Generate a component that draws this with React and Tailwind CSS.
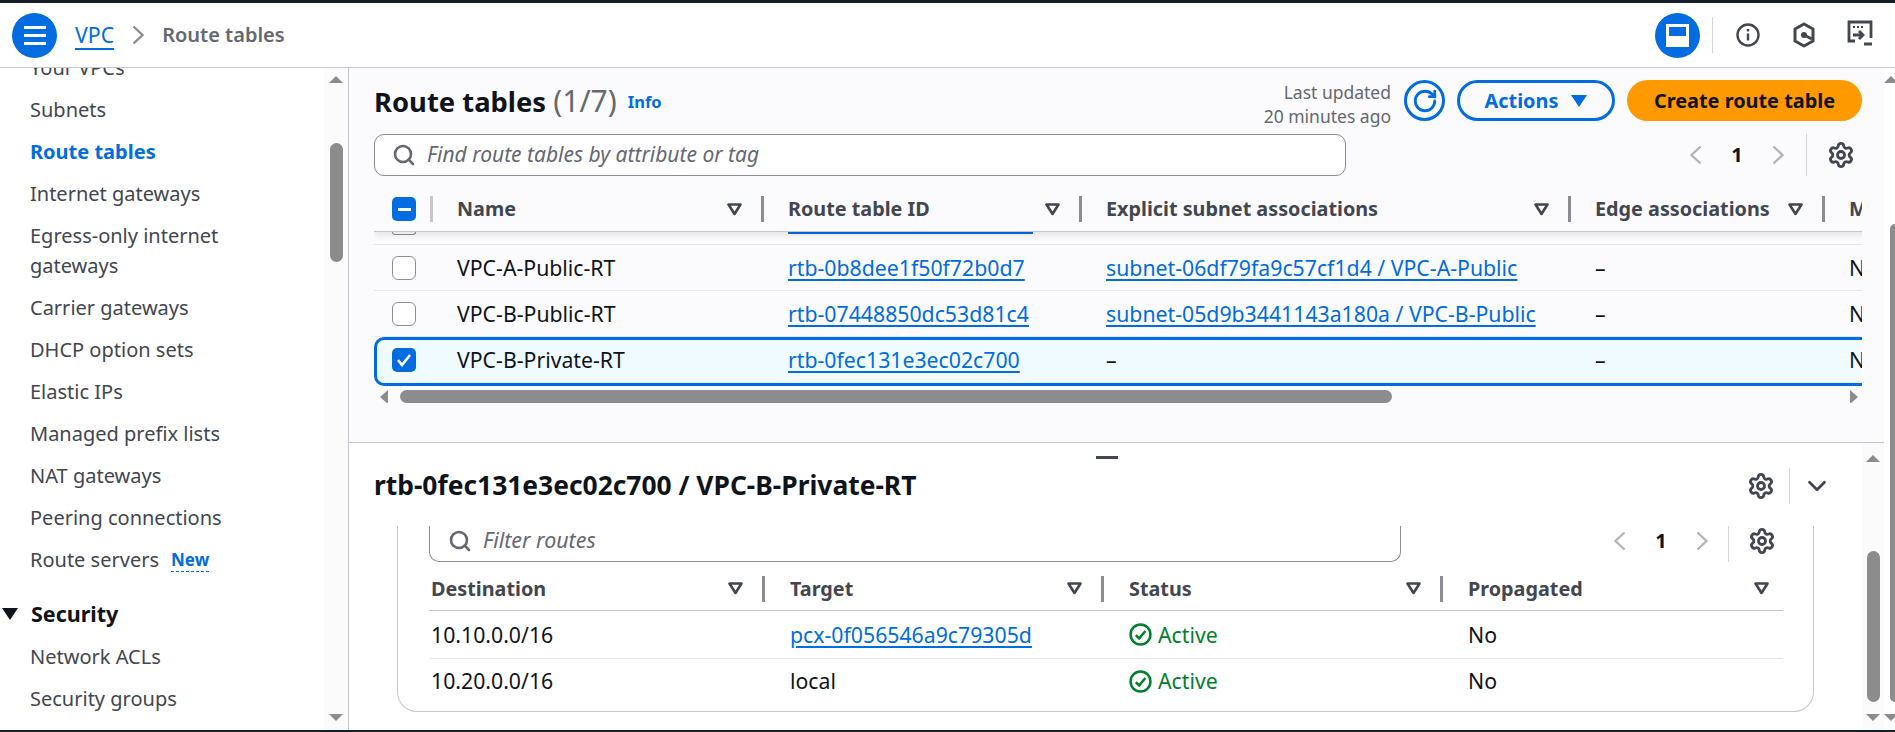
import { Search, Settings, ChevronDown, RotateCw } from 'lucide-react';

const navItems = [
    { label: 'Subnets' },
    { label: 'Route tables', active: true },
    { label: 'Internet gateways' },
    { label: 'Egress-only internet gateways' },
    { label: 'Carrier gateways' },
    { label: 'DHCP option sets' },
    { label: 'Elastic IPs' },
    { label: 'Managed prefix lists' },
    { label: 'NAT gateways' },
    { label: 'Peering connections' },
];

const routeColumns = [
    { label: 'Name', width: 'w-[331px]' },
    { label: 'Route table ID', width: 'w-[318px]' },
    { label: 'Explicit subnet associations', width: 'w-[489px]' },
    { label: 'Edge associations', width: 'w-[254px]' },
];

const rows = [
    { name: 'VPC-A-Public-RT', id: 'rtb-0b8dee1f50f72b0d7', subnet: 'subnet-06df79fa9c57cf1d4 / VPC-A-Public' },
    { name: 'VPC-B-Public-RT', id: 'rtb-07448850dc53d81c4', subnet: 'subnet-05d9b3441143a180a / VPC-B-Public' },
];

const Caret = () => (
    <svg width="15" height="13" viewBox="0 0 15 13" className="shrink-0">
        <path d="M1.5 1.5h12L7.5 11z" fill="none" stroke="#424650" strokeWidth="2.6" strokeLinejoin="round" />
    </svg>
);

const HeaderSep = () => <div className="w-[3px] h-[26px] bg-[#8c8c94] shrink-0" />;

const PageLeft = ({ className }) => (
    <svg width="13" height="20" viewBox="0 0 13 20" fill="none" stroke="currentColor" strokeWidth="2.4" className={className}>
        <path d="M11.5 1.5L2.5 10l9 8.5" />
    </svg>
);

const PageRight = ({ className }) => (
    <svg width="13" height="20" viewBox="0 0 13 20" fill="none" stroke="currentColor" strokeWidth="2.4" className={className}>
        <path d="M1.5 1.5l9 8.5-9 8.5" />
    </svg>
);

const Link = ({ children }) => (
    <span className="text-[#006ce0] underline underline-offset-[3px] decoration-[1.5px] whitespace-nowrap">{children}</span>
);

const Scrollbar = ({ arrowTop = 8, thumbTop, thumbHeight, className }) => (
    <div className={`flex flex-col items-center bg-[#fbfbfb] shrink-0 ${className}`}>
        <div className="w-0 h-0 border-x-[7px] border-x-transparent border-b-[7px] border-b-[#8c8c8c]" style={{ marginTop: arrowTop }} />
        <div className="w-[13px] rounded-full bg-[#8c8c8c]" style={{ marginTop: thumbTop, height: thumbHeight }} />
        <div className="flex-1" />
        <div className="w-0 h-0 border-x-[7px] border-x-transparent border-t-[7px] border-t-[#8c8c8c] mb-[9px]" />
    </div>
);

const Pager = () => (
    <div className="flex items-center text-[#b4b4bb]">
        <PageLeft />
        <span className="w-[70px] text-center text-[#0f141a] font-bold text-[20px]">1</span>
        <PageRight />
    </div>
);

const Sidebar = () => (
    <aside className="w-[349px] shrink-0 flex border-r border-[#c6c6cd] overflow-hidden">
        <div className="flex-1 min-w-0 text-[20px] text-[#424650] overflow-hidden">
            <div className="pl-[30px] h-[30px] -mt-[15px] leading-[30px]">Your VPCs</div>
            <ul className="pl-[30px] mt-[12px] flex flex-col gap-[12px] pr-[60px]">
                {navItems.map((item) => (
                    <li key={item.label} className={`leading-[30px] ${item.active ? 'text-[#006ce0] font-bold' : ''}`}>
                        {item.label}
                    </li>
                ))}
                <li className="leading-[30px] flex items-center gap-[12px] whitespace-nowrap">
                    Route servers
                    <span className="text-[#006ce0] font-bold text-[17px] border-b border-dashed border-[#006ce0] leading-[23px]">New</span>
                </li>
            </ul>
            <div className="flex items-center mt-[25px] h-[28px] text-[#0f141a] font-bold text-[21.5px]">
                <div className="w-0 h-0 ml-[2px] mr-[13px] border-x-[8px] border-x-transparent border-t-[12px] border-t-[#0f141a]" />
                Security
            </div>
            <ul className="pl-[30px] mt-[14px] flex flex-col gap-[12px]">
                <li className="leading-[30px]">Network ACLs</li>
                <li className="leading-[30px]">Security groups</li>
            </ul>
        </div>
        <Scrollbar className="w-[24px]" thumbTop={60} thumbHeight={119} />
    </aside>
);

const TopNav = () => (
    <header className="h-[65px] shrink-0 flex items-center border-b border-[#c6c6cd] bg-white pl-[12px] pr-[22px]">
        <div className="w-[45px] h-[45px] rounded-full bg-[#006ce0] flex flex-col items-center justify-center gap-[5px]">
            <span className="w-[22px] h-[3px] bg-white" />
            <span className="w-[22px] h-[3px] bg-white" />
            <span className="w-[22px] h-[3px] bg-white" />
        </div>
        <span className="ml-[18px] text-[21.3px] text-[#006ce0] underline underline-offset-[5px] decoration-[1.5px]">VPC</span>
        <PageRight className="ml-[18px] text-[#8c8c94]" />
        <span className="ml-[17px] text-[20px] font-semibold text-[#656871]">Route tables</span>
        <div className="flex-1" />
        <div className="w-[45px] h-[45px] rounded-full bg-[#006ce0] flex items-center justify-center">
            <div className="w-[23px] h-[23px] border-[3px] border-white flex flex-col justify-end">
                <div className="h-[8px] bg-white" />
            </div>
        </div>
        <div className="w-px h-[36px] bg-[#d5d5da] ml-[12px]" />
        <svg width="26" height="26" viewBox="0 0 26 26" className="ml-[22px]" fill="none" stroke="#424650" strokeWidth="2.4">
            <circle cx="13" cy="13" r="10.5" />
            <path d="M13 11.5v7M13 7v2.6" />
        </svg>
        <svg width="24" height="28" viewBox="0 0 24 28" className="ml-[31px]" fill="none" stroke="#424650" strokeWidth="3">
            <path d="M12 3l9 5v12l-9 5-9-5V8z" strokeLinejoin="round" />
            <circle cx="12" cy="14" r="3" fill="#424650" stroke="none" />
            <path d="M12 14l8 4" />
        </svg>
        <svg width="26" height="30" viewBox="0 0 26 30" className="ml-[31px]" fill="none" stroke="#424650" strokeWidth="2.8">
            <path d="M8 21H2V2h22v16" />
            <path d="M6 7h2M10 7h2M14 7h2" strokeWidth="2" />
            <path d="M6 15h9M12 11l4 4-4 4" />
            <path d="M17 24h8" strokeWidth="3" />
        </svg>
    </header>
);

const RouteTables = () => (
    <section className="h-[375px] shrink-0 bg-[#fbfbfd] border-b border-[#c6c6cd] pl-[25px] pr-[22px] flex flex-col overflow-hidden">
        {/* Title row */}
        <div className="flex items-center h-[41px] mt-[12px] shrink-0">
            <h1 className="text-[27.4px] font-bold text-[#0f141a] whitespace-nowrap">
                Route tables <span className="font-normal text-[30px] text-[#656871]">(1/7)</span>
            </h1>
            <span className="ml-[11px] mt-[4px] text-[16.5px] font-bold text-[#006ce0]">Info</span>
            <div className="flex-1" />
            <div className="mt-[6px] text-right text-[17.5px] leading-[24px] text-[#656871] whitespace-nowrap">
                <div>Last updated</div>
                <div>20 minutes ago</div>
            </div>
            <div className="ml-[13px] w-[41px] h-[41px] rounded-full border-[3px] border-[#006ce0] flex items-center justify-center text-[#006ce0]">
                <RotateCw size={26} strokeWidth={2.6} />
            </div>
            <div className="ml-[12px] w-[158px] h-[41px] rounded-full border-[3px] border-[#006ce0] flex items-center justify-center gap-[13px] text-[19.9px] font-bold text-[#006ce0]">
                Actions
                <div className="w-0 h-0 border-x-[8px] border-x-transparent border-t-[12px] border-t-[#006ce0]" />
            </div>
            <div className="ml-[12px] w-[235px] h-[41px] rounded-full bg-[#ff9900] flex items-center justify-center text-[19.9px] font-bold text-[#0f141a]">
                Create route table
            </div>
        </div>

        {/* Search */}
        <div className="flex items-center h-[42px] mt-[13px] shrink-0">
            <div className="w-[972px] h-[42px] rounded-[10px] border border-[#8c8c94] bg-white flex items-center pl-[17px] text-[#656871] italic text-[21px]">
                <Search size={24} strokeWidth={2.6} className="text-[#656871]" />
                <span className="ml-[11px]">Find route tables by attribute or tag</span>
            </div>
            <div className="flex-1" />
            <Pager />
            <div className="w-px h-[42px] bg-[#d5d5da] ml-[21px]" />
            <Settings size={28} strokeWidth={2.4} className="ml-[20px] mr-[7px] text-[#424650]" />
        </div>

        {/* Table */}
        <div className="mt-[16px] overflow-hidden shrink-0">
            <div className="relative z-10 flex items-center h-[40px] pb-[5px] font-bold text-[19.8px] text-[#424650] border-b border-[#c6c6cd] shadow-[0_4px_6px_rgba(0,0,0,0.08)] bg-[#fbfbfd] w-[1600px]">
                <div className="w-[59px] flex items-center justify-between pl-[18px] shrink-0">
                    <div className="w-[24px] h-[24px] rounded-[5px] bg-[#006ce0] flex items-center justify-center">
                        <span className="w-[13px] h-[3px] bg-white" />
                    </div>
                    <div className="w-[3px] h-[26px] bg-[#c6c6cd]" />
                </div>
                {routeColumns.map((col) => (
                    <div key={col.label} className={`${col.width} shrink-0 flex items-center justify-between pl-[24px]`}>
                        <span className="whitespace-nowrap">{col.label}</span>
                        <div className="flex items-center gap-[19px]">
                            <Caret />
                            <HeaderSep />
                        </div>
                    </div>
                ))}
                <div className="pl-[24px]">Main</div>
            </div>

            {/* Row scrolled under the sticky header, only its last pixels show */}
            <div className="flex items-start h-[13px] border-b border-[#e8e8ec] w-[1600px] overflow-hidden">
                <div className="ml-[18px] w-[24px] h-[3px] rounded-b-[5px] border border-t-0 border-[#8c8c94]" />
                <div className="ml-[372px] w-[245px] h-[2px] bg-[#006ce0]" />
            </div>

            {rows.map((row) => (
                <div key={row.id} className="flex items-center h-[46px] text-[21.25px] text-[#0f141a] border-b border-[#e8e8ec] w-[1600px]">
                    <div className="w-[59px] pl-[18px] shrink-0">
                        <div className="w-[24px] h-[24px] rounded-[6px] border-[1.5px] border-[#8c8c94] bg-white" />
                    </div>
                    <div className="w-[331px] shrink-0 pl-[24px]">{row.name}</div>
                    <div className="w-[318px] shrink-0 pl-[24px]"><Link>{row.id}</Link></div>
                    <div className="w-[489px] shrink-0 pl-[24px]"><Link>{row.subnet}</Link></div>
                    <div className="w-[254px] shrink-0 pl-[24px]">–</div>
                    <div className="pl-[24px]">No</div>
                </div>
            ))}
            <div className="flex items-center h-[49px] pb-[3px] text-[21.25px] text-[#0f141a] border-[3px] border-r-0 border-[#006ce0] rounded-l-[10px] bg-[#f0fbff] w-[1600px]">
                <div className="w-[56px] pl-[15px] shrink-0">
                    <div className="w-[24px] h-[24px] rounded-[5px] bg-[#006ce0] flex items-center justify-center">
                        <svg width="16" height="14" viewBox="0 0 16 14" fill="none" stroke="white" strokeWidth="2.6">
                            <path d="M2 7l4 5 8-10" />
                        </svg>
                    </div>
                </div>
                <div className="w-[331px] shrink-0 pl-[24px]">VPC-B-Private-RT</div>
                <div className="w-[318px] shrink-0 pl-[24px]"><Link>rtb-0fec131e3ec02c700</Link></div>
                <div className="w-[489px] shrink-0 pl-[24px]">–</div>
                <div className="w-[254px] shrink-0 pl-[24px]">–</div>
                <div className="pl-[24px]">No</div>
            </div>

            {/* Horizontal scrollbar */}
            <div className="flex items-center h-[13px] mt-[4px] pl-[6px]">
                <div className="w-0 h-0 border-y-[7px] border-y-transparent border-r-[8px] border-r-[#8c8c8c]" />
                <div className="ml-[12px] w-[992px] h-[13px] rounded-full bg-[#8c8c8c]" />
                <div className="flex-1" />
                <div className="w-0 h-0 border-y-[7px] border-y-transparent border-l-[8px] border-l-[#8c8c8c] mr-[4px]" />
            </div>
        </div>
    </section>
);

const statusCell = (
    <span className="flex items-center gap-[6px] text-[#00802f]">
        <svg width="23" height="23" viewBox="0 0 22 22" fill="none" stroke="#00802f" strokeWidth="2.4">
            <circle cx="11" cy="11" r="9.5" />
            <path d="M6.5 11.5l3.2 3.2 6-7" />
        </svg>
        Active
    </span>
);

const RoutesPanel = () => (
    <section className="flex-1 min-h-0 flex bg-white">
        <div className="flex-1 min-w-0 flex flex-col">
            {/* Drag handle */}
            <div className="h-[14px] flex justify-center shrink-0 pt-[13px]">
                <span className="w-[22px] h-[3px] bg-[#424650] ml-[2px]" />
            </div>
            <div className="flex items-center h-[40px] mt-[9px] pl-[25px] shrink-0">
                <h2 className="text-[26.4px] font-bold text-[#0f141a]">rtb-0fec131e3ec02c700 / VPC-B-Private-RT</h2>
                <div className="flex-1" />
                <Settings size={28} strokeWidth={2.4} className="text-[#424650]" />
                <div className="w-px h-[36px] bg-[#d5d5da] ml-[14px]" />
                <ChevronDown size={30} strokeWidth={2.2} className="ml-[12px] mr-[30px] text-[#424650]" />
            </div>

            {/* Routes card (scrolled, so its top edge is out of view) */}
            <div className="ml-[48px] w-[1417px] h-[186px] mt-[20px] border border-t-0 border-[#c6c6cd] rounded-b-[20px] pl-[31px] pr-[30px] flex flex-col">
                <div className="flex items-start h-[36px] shrink-0">
                    <div className="w-[972px] h-[36px] border border-t-0 border-[#8c8c94] rounded-b-[10px] flex items-center pb-[6px] pl-[18px] text-[21.4px] italic text-[#656871]">
                        <Search size={24} strokeWidth={2.6} />
                        <span className="ml-[11px]">Filter routes</span>
                    </div>
                    <div className="flex-1 h-[36px]" />
                    <div className="h-[30px] flex items-center"><Pager /></div>
                    <div className="w-px h-[36px] bg-[#d5d5da] ml-[19px]" />
                    <Settings size={28} strokeWidth={2.4} className="ml-[19px] mr-[7px] mt-[1px] text-[#424650]" />
                </div>
                <div className="flex items-center h-[49px] pt-[5px] text-[19.8px] font-bold text-[#424650] border-b border-[#c6c6cd]">
                    <div className="w-[336px] shrink-0 flex items-center justify-between pl-[2px]">
                        Destination
                        <div className="flex items-center gap-[19px]"><Caret /><HeaderSep /></div>
                    </div>
                    <div className="w-[339px] shrink-0 flex items-center justify-between pl-[25px]">
                        Target
                        <div className="flex items-center gap-[19px]"><Caret /><HeaderSep /></div>
                    </div>
                    <div className="w-[339px] shrink-0 flex items-center justify-between pl-[25px]">
                        Status
                        <div className="flex items-center gap-[19px]"><Caret /><HeaderSep /></div>
                    </div>
                    <div className="flex-1 flex items-center justify-between pl-[25px] pr-[14px]">
                        Propagated
                        <Caret />
                    </div>
                </div>
                <div className="flex items-center h-[48px] text-[21.25px] text-[#0f141a] border-b border-[#e8e8ec]">
                    <div className="w-[336px] shrink-0 pl-[2px]">10.10.0.0/16</div>
                    <div className="w-[339px] shrink-0 pl-[25px]"><Link>pcx-0f056546a9c79305d</Link></div>
                    <div className="w-[339px] shrink-0 pl-[25px]">{statusCell}</div>
                    <div className="pl-[25px]">No</div>
                </div>
                <div className="flex items-center h-[44px] text-[21.25px] text-[#0f141a]">
                    <div className="w-[336px] shrink-0 pl-[2px]">10.20.0.0/16</div>
                    <div className="w-[339px] shrink-0 pl-[25px]">local</div>
                    <div className="w-[339px] shrink-0 pl-[25px]">{statusCell}</div>
                    <div className="pl-[25px]">No</div>
                </div>
            </div>
        </div>
        <Scrollbar className="w-[22px]" arrowTop={12} thumbTop={89} thumbHeight={151} />
    </section>
);

// Page scrollbar, mostly cut off by the right edge of the capture
const PageScrollbar = () => (
    <div className="w-[11px] shrink-0 flex flex-col items-end overflow-hidden bg-white">
        <div className="w-0 h-0 mt-[8px] -mr-[3px] border-x-[7px] border-x-transparent border-b-[7px] border-b-[#8c8c8c]" />
        <div className="w-[5px] h-[478px] mt-[141px] rounded-l-full bg-[#8c8c8c]" />
        <div className="flex-1" />
        <div className="w-0 h-0 mb-[9px] -mr-[3px] border-x-[7px] border-x-transparent border-t-[7px] border-t-[#8c8c8c]" />
    </div>
);

const App = () => (
    <div className="w-full h-[732px] flex flex-col overflow-hidden bg-white font-['Noto_Sans',sans-serif]">
        <div className="h-[3px] bg-[#161d26] shrink-0" />
        <TopNav />
        <div className="flex-1 min-h-0 flex">
            <Sidebar />
            <main className="flex-1 min-w-0 flex flex-col">
                <RouteTables />
                <RoutesPanel />
            </main>
            <PageScrollbar />
        </div>
        <div className="h-[2px] bg-[#161d26] shrink-0" />
    </div>
);

export default App;
